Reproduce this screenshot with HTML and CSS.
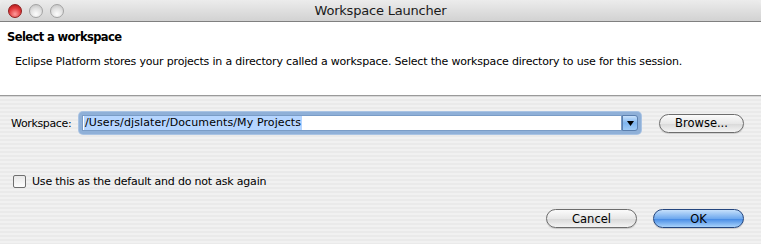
FILE: index.html
```html
<!DOCTYPE html>
<html>
<head>
<meta charset="utf-8">
<link rel="stylesheet" href="styles.css">
</head>
<body>
<div class="window">
  <div class="titlebar">
    <div class="lights">
      <span class="light close"></span>
      <span class="light"></span>
      <span class="light"></span>
    </div>
    <div class="title">Workspace Launcher</div>
  </div>
  <div class="header">
    <div class="heading">Select a workspace</div>
    <div class="desc">Eclipse Platform stores your projects in a directory called a workspace. Select the workspace directory to use for this session.</div>
  </div>
  <div class="content">
    <div class="ws-row">
      <span class="label">Workspace:</span>
      <div class="combo">
        <div class="field"><span class="sel">/Users/djslater/Documents/My Projects</span></div>
        <div class="arrow"><svg width="7" height="5" viewBox="0 0 7 5"><path d="M0 0H7L3.5 5Z" fill="#000"/></svg></div>
      </div>
      <div class="btn browse">Browse...</div>
    </div>
    <div class="check-row">
      <span class="checkbox"></span>
      <span class="check-label">Use this as the default and do not ask again</span>
    </div>
    <div class="btn-row">
      <div class="btn cancel">Cancel</div>
      <div class="btn ok">OK</div>
    </div>
  </div>
</div>
</body>
</html>
```
FILE: styles.css
```css
html, body {
  margin: 0;
  padding: 0;
  background: #ececec;
}
body {
  font-family: "DejaVu Sans", "Liberation Sans", sans-serif;
  color: #000;
}
.window {
  width: 761px;
  height: 244px;
  display: flex;
  flex-direction: column;
  overflow: hidden;
}
.titlebar {
  height: 21px;
  border-bottom: 1px solid #808080;
  background: linear-gradient(#ececec, #d2d2d2);
  border-top-right-radius: 6px;
  border-top-left-radius: 6px;
  position: relative;
  display: flex;
  align-items: center;
  justify-content: center;
  flex-shrink: 0;
}
.lights {
  position: absolute;
  left: 8px;
  top: 4px;
  display: flex;
  gap: 7px;
}
.light {
  width: 14px;
  height: 14px;
  border-radius: 50%;
  box-sizing: border-box;
  border: 1px solid #a3a3a3;
  background: radial-gradient(circle at 50% 75%, #fdfdfd 0, #e2e2e2 50%, #bdbdbd 100%);
}
.light.close {
  border-color: #8e1c1c;
  background: radial-gradient(circle at 50% 75%, #ff9c9c 0, #e0383a 55%, #a51414 100%);
}
.title {
  font-size: 13px;
  color: #1a1a1a;
  letter-spacing: -0.2px;
}
.header {
  background: #fff;
  height: 74px;
  box-sizing: border-box;
  border-bottom: 1px solid #9a9a9a;
  padding: 8px 0 0 7px;
  flex-shrink: 0;
}
.heading {
  font-size: 11.5px;
  font-weight: bold;
  line-height: 15px;
  letter-spacing: -0.6px;
}
.desc {
  font-size: 11px;
  line-height: 14px;
  margin-top: 10px;
  margin-left: 8px;
  letter-spacing: -0.19px;
}
.content {
  flex: 1;
  background: repeating-linear-gradient(#f1f1f1 0 2px, #eaeaea 2px 4px);
  border-top: 1px solid #d8d8d8;
  display: flex;
  flex-direction: column;
}
.ws-row {
  display: flex;
  align-items: center;
  margin-top: 15px;
  height: 22px;
}
.label {
  font-size: 11px;
  margin-left: 11px;
  width: 68px;
  letter-spacing: -0.35px;
}
.combo {
  display: flex;
  width: 562px;
  height: 22px;
  box-sizing: border-box;
  border-radius: 4px;
  padding: 3px;
  background: #8fb0d8;
  box-shadow: 0 0 0 1px #a9c3e3;
}
.field {
  flex: 1;
  background: #fff;
  border: 1px solid #7a9cc6;
  display: flex;
  align-items: center;
  padding-left: 1px;
}
.sel {
  background: #b5d5ff;
  font-size: 11px;
  line-height: 14px;
  padding: 0 1px;
  letter-spacing: 0.1px;
}
.arrow {
  width: 14px;
  background: linear-gradient(#c9e1fb, #7fb5ef 50%, #9fcaf6);
  border: 1px solid #5b7fae;
  border-radius: 0 3px 3px 0;
  display: flex;
  align-items: center;
  justify-content: center;
}
.btn {
  box-sizing: border-box;
  height: 19px;
  border-radius: 10px;
  border: 1px solid #6d6d6d;
  background: linear-gradient(#fbfbfb, #e7e7e7 50%, #dadada 55%, #f4f4f4);
  font-size: 11.5px;
  display: flex;
  align-items: center;
  justify-content: center;
  box-shadow: 0 1px 1px rgba(0,0,0,0.15);
}
.browse {
  width: 85px;
  margin-left: 18px;
}
.check-row {
  display: flex;
  align-items: center;
  margin-top: 40px;
  margin-left: 13px;
  height: 14px;
}
.checkbox {
  width: 13px;
  height: 13px;
  box-sizing: border-box;
  border: 1px solid #6f6f6f;
  border-radius: 2px;
  background: linear-gradient(#e8e8e8, #fdfdfd);
  margin-right: 6px;
}
.check-label {
  font-size: 11px;
  letter-spacing: -0.2px;
}
.btn-row {
  display: flex;
  justify-content: flex-end;
  margin-top: 21px;
  margin-right: 17px;
  gap: 16px;
}
.cancel, .ok {
  width: 91px;
}
.ok {
  border-color: #24467f;
  background: linear-gradient(#c5e0fb, #6fa9ee 50%, #4a8ee6 55%, #a9d3fb);
}
```
